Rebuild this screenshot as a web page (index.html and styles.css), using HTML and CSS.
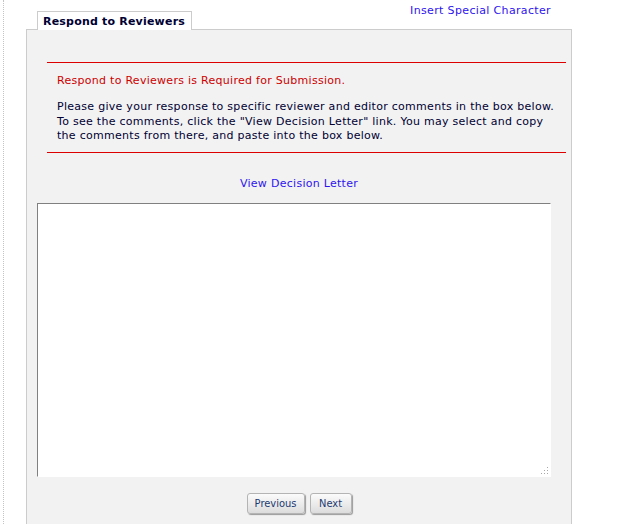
FILE: index.html
```html
<!DOCTYPE html>
<html>
<head>
<meta charset="utf-8">
<link rel="stylesheet" href="styles.css">
</head>
<body>
<div class="page">
  <div class="header">
    <div class="tab">Respond to Reviewers</div>
    <a class="special" href="#">Insert Special Character</a>
  </div>
  <div class="panel">
    <div class="notice">
      <p class="required">Respond to Reviewers is Required for Submission.</p>
      <p class="info">Please give your response to specific reviewer and editor comments in the box below. To see the comments, click the "View Decision Letter" link. You may select and copy the comments from there, and paste into the box below.</p>
    </div>
    <div class="letter"><a href="#">View Decision Letter</a></div>
    <div class="area-wrap">
      <textarea class="response"></textarea>
      <svg class="grip" width="9" height="9" viewBox="0 0 9 9">
        <rect x="7" y="1" width="1" height="1" fill="#a8a8a8"/>
        <rect x="7" y="4" width="1" height="1" fill="#a8a8a8"/>
        <rect x="4" y="4" width="1" height="1" fill="#a8a8a8"/>
        <rect x="7" y="7" width="1" height="1" fill="#a8a8a8"/>
        <rect x="4" y="7" width="1" height="1" fill="#a8a8a8"/>
        <rect x="1" y="7" width="1" height="1" fill="#a8a8a8"/>
      </svg>
    </div>
    <div class="buttons">
      <button class="btn btn-prev">Previous</button>
      <button class="btn btn-next">Next</button>
    </div>
  </div>
</div>
</body>
</html>
```

FILE: styles.css
```css
html, body {
  margin: 0;
  padding: 0;
  height: 100%;
  background: #ffffff;
}
body {
  font-family: "DejaVu Sans", Verdana, sans-serif;
  font-size: 11px;
  letter-spacing: 0.28px;
  color: #000033;
}
.page {
  margin-left: 3px;
  border-left: 1px dotted #c4c4c4;
  min-height: 100%;
  box-sizing: border-box;
  padding-left: 22px;
  display: flex;
  flex-direction: column;
}
.header {
  display: flex;
  align-items: flex-start;
  width: 546px;
}
.tab {
  position: relative;
  z-index: 1;
  margin: 11px 0 -1px 11px;
  height: 19px;
  box-sizing: border-box;
  padding: 2px 5px 0 5px;
  background: #ffffff;
  border: 1px solid #cccccc;
  border-bottom: none;
  font-weight: bold;
  font-size: 11px;
  line-height: 15px;
  letter-spacing: 0.2px;
  color: #000033;
  width: 155px;
  white-space: nowrap;
}
.special {
  margin-left: auto;
  margin-right: 21px;
  margin-top: 4px;
  font-size: 11px;
  line-height: 14px;
  letter-spacing: 0.35px;
  color: #2e14f0;
  text-decoration: none;
}
.panel {
  flex: 1;
  width: 546px;
  box-sizing: border-box;
  background: #f2f2f2;
  border: 1px solid #cccccc;
  border-bottom: none;
  padding-top: 32px;
  padding-bottom: 10px;
}
.notice {
  margin: 0 5px 0 20px;
  border-top: 1px solid #dd0000;
  border-bottom: 1px solid #dd0000;
  padding: 11px 6px 8px 10px;
}
.notice p {
  margin: 0;
  line-height: 14px;
}
.required {
  color: #cc0000;
}
.info {
  margin-top: 12px !important;
  line-height: 14.5px !important;
}
.letter {
  text-align: center;
  margin-top: 24px;
  line-height: 14px;
}
.letter a {
  color: #2e14f0;
  text-decoration: none;
}
.area-wrap {
  position: relative;
  margin: 12px 0 0 10px;
  width: 514px;
  height: 274px;
}
.response {
  display: block;
  width: 514px;
  height: 274px;
  box-sizing: border-box;
  background: #ffffff;
  border-style: solid;
  border-width: 1px;
  border-color: #808080 #ffffff #ffffff #808080;
  padding: 2px;
  font-family: "DejaVu Sans", Verdana, sans-serif;
  font-size: 11px;
  outline: none;
  resize: none;
}
.grip {
  position: absolute;
  right: 2px;
  bottom: 2px;
}
.buttons {
  display: flex;
  justify-content: center;
  gap: 5px;
  margin-top: 16px;
}
.btn {
  height: 21px;
  box-sizing: border-box;
  padding: 0;
  border: 1px solid #b4b4b4;
  border-radius: 3px;
  background: linear-gradient(#fbfbfb, #e9e9e9 60%, #dcdcdc);
  box-shadow: 1px 1px 1px #9a9a9a;
  font-family: "DejaVu Sans Condensed", "DejaVu Sans", sans-serif;
  font-size: 11px;
  letter-spacing: 0;
  color: #1d3a70;
  cursor: pointer;
}
.btn-prev {
  width: 58px;
}
.btn-next {
  width: 42px;
}
```
